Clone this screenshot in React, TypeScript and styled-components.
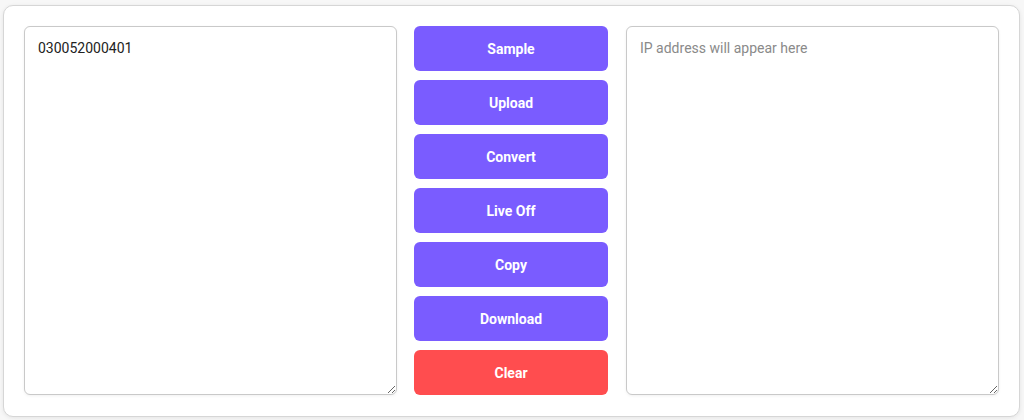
import styled, { createGlobalStyle } from 'styled-components';

const GlobalStyle = createGlobalStyle`
  html, body {
    margin: 0;
    padding: 0;
    background: #f7f7f7;
    font-family: Roboto, 'Noto Sans', sans-serif;
  }
  * {
    box-sizing: border-box;
  }
`;

const Page = styled.div`
  padding: 5px 4px 3px 3px;
  height: 420px;
`;

const Card = styled.div`
  display: grid;
  grid-template-columns: 373px 229px 1fr;
  height: 412px;
  padding: 20px 20px 21px 20px;
  background: #fff;
  border: 1px solid #d6d6d6;
  border-radius: 10px;
  box-shadow: 0 1px 4px rgba(0, 0, 0, 0.08);
`;

const Field = styled.textarea`
  width: 100%;
  height: 100%;
  padding: 11px 13px;
  border: 1px solid #c9c9c9;
  border-radius: 6px;
  font-family: Roboto, 'Noto Sans', sans-serif;
  font-size: 14px;
  line-height: 20px;
  color: #222;
  background: #fff;
  resize: both;
  outline: none;
  box-shadow: 0 1px 3px rgba(0, 0, 0, 0.06);

  &::placeholder {
    color: #8a8a8a;
  }
`;

const Actions = styled.div`
  display: flex;
  flex-direction: column;
  gap: 9px;
  padding: 0 18px 0 17px;
`;

const Button = styled.button<{ $danger?: boolean }>`
  height: 45px;
  border: none;
  border-radius: 6px;
  background: ${({ $danger }) => ($danger ? '#ff4d4f' : '#7a5cff')};
  color: #fff;
  font-family: Roboto, 'Noto Sans', sans-serif;
  font-size: 14px;
  font-weight: 700;
  cursor: pointer;
`;

const labels = ['Sample', 'Upload', 'Convert', 'Live Off', 'Copy', 'Download'];

const App = () => {
  return (
    <>
      <GlobalStyle />
      <Page>
        <Card>
          <Field defaultValue="030052000401" />
          <Actions>
            {labels.map((label) => (
              <Button key={label}>{label}</Button>
            ))}
            <Button $danger>Clear</Button>
          </Actions>
          <Field placeholder="IP address will appear here" readOnly />
        </Card>
      </Page>
    </>
  );
};

export default App;
